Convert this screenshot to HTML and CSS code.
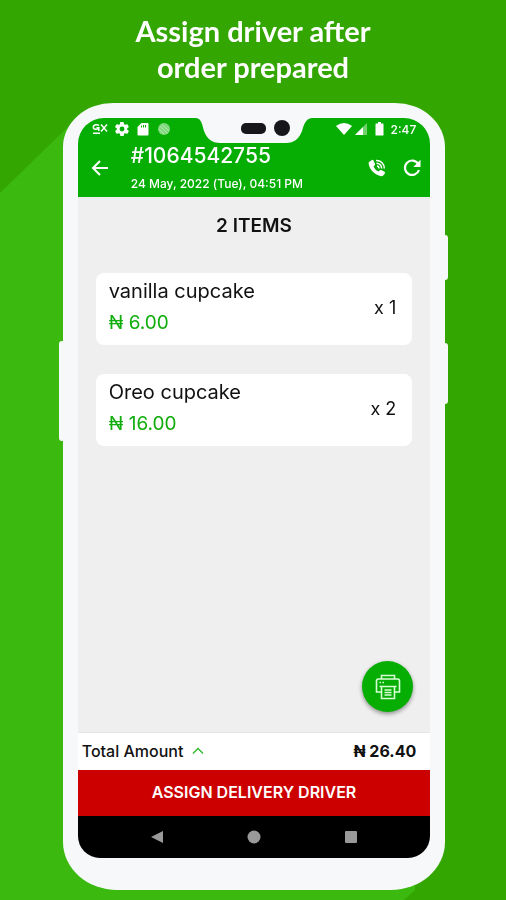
FILE: index.html
```html
<!DOCTYPE html>
<html lang="en">
<head>
<meta charset="utf-8">
<meta name="viewport" content="width=device-width, initial-scale=1">
<title>Assign driver after order prepared</title>
<link rel="stylesheet" href="styles.css">
</head>
<body>
<svg class="backdrop" viewBox="0 0 506 900" preserveAspectRatio="none" aria-hidden="true">
  <path d="M0 193L76 119 415 600V890L404 900H0z" fill="#3bb90f"/>
</svg>
<main class="page">
  <h1 class="headline">Assign driver after<br>order prepared</h1>
  <div class="phone">
    <span class="key key-left"></span>
    <span class="key key-power"></span>
    <span class="key key-volume"></span>
    <div class="screen">
      <div class="notch">
        <svg width="116" height="26" viewBox="0 0 116 26" aria-hidden="true">
          <path d="M0 0C6 1 6 7 8 13C11 21 16 25 24 25H90C98 25 103 21 106 13C108 7 109 1 116 0z" fill="#f6f8fa"/>
          <rect x="45" y="5" width="25" height="11" rx="5" fill="#17171b"/>
          <circle cx="86" cy="10" r="8" fill="#17171b"/>
        </svg>
      </div>
      <div class="status">
        <div class="status-group">
          <svg width="16" height="14" viewBox="0 0 16 14" fill="none" stroke="#fff" aria-hidden="true">
            <path d="M7 3.5C6 2.5 1.5 2 1.3 5C1.3 8 6 8 6.8 5.8H4.5M6.8 6V9M1 11.2H8" stroke-width="1.5"/>
            <path d="M9 2.5L15 9.5M15 2.5L9 9.5" stroke-width="1.5"/>
          </svg>
          <svg width="14" height="14" viewBox="2 2 20 20" fill="#fff" aria-hidden="true"><path d="M19.4 13c.1-.7.1-1.3 0-2l2.1-1.600c.2-.2.2-.4.1-.6l-2-3.500c-.1-.2-.3-.3-.6-.2l-2.500 1c-.5-.4-1.100-.7-1.700-1l-.4-2.600c0-.3-.2-.5-.5-.5h-4c-.3 0-.5.2-.5.5L9 5.100c-.6.3-1.200.6-1.700 1l-2.500-1c-.2-.1-.5 0-.6.2l-2 3.500c-.1.2 0 .4.1.6L4.500 11c-.1.7-.1 1.300 0 2l-2.100 1.600c-.2.2-.2.4-.1.6l2 3.500c.1.2.3.3.6.2l2.500-1c.5.4 1.100.7 1.700 1l.4 2.600c0 .3.2.5.5.5h4c.3 0 .5-.2.5-.5l.4-2.600c.6-.3 1.200-.6 1.700-1l2.500 1c.2.1.5 0 .6-.2l2-3.500c.1-.2.1-.4-.1-.6zM12 15.500a3.500 3.500 0 1 1 0-7 3.500 3.500 0 0 1 0 7z"/></svg>
          <svg width="14" height="14" viewBox="0 0 14 14" fill="#fff" aria-hidden="true"><path fill-rule="evenodd" d="M5.500 1H11.500Q12.500 1 12.500 2V12Q12.500 13.500 11.500 13.500H2.500Q1.500 13.500 1.500 12V5zM5 3.500V5.500H6V3.500zM7 3V5.500H8V3zM9 3V5.500H10V3z"/></svg>
          <svg width="14" height="14" viewBox="0 0 14 14" aria-hidden="true"><circle cx="7" cy="7" r="6" fill="#7fd77c"/><path d="M3 4L10 11M5 2.500L12 9M2 7L7 12" stroke="#b5e9b2"/></svg>
        </div>
        <div class="status-group status-right">
          <svg width="16" height="14" viewBox="0 0 16 14" fill="#fff" aria-hidden="true"><path d="M0 4Q8-2 16 4L8 13z"/></svg>
          <svg width="13" height="14" viewBox="0 0 13 14" aria-hidden="true"><path d="M0 13L12 1V13z" fill="#71d16e"/><path d="M0 13L8 5V13z" fill="#fff"/></svg>
          <svg class="battery" width="9" height="14" viewBox="0 0 9 14" fill="#fff" aria-hidden="true"><path d="M3 0H6V1.500H8Q8.500 1.500 8.500 2V13Q8.500 13.500 8 13.500H1Q.5 13.500 .5 13V2Q.5 1.500 1 1.500H3z"/></svg>
          <span>2:47</span>
        </div>
      </div>
      <header class="appbar">
        <button class="icon-button" type="button" aria-label="Back">
          <svg width="18" height="18" viewBox="0 0 18 18" fill="none" stroke="#fff" stroke-width="2"><path d="M17 9H2.500M9 2L2 9L9 16"/></svg>
        </button>
        <div class="order">
          <h2 class="order-id">#1064542755</h2>
          <p class="order-date">24 May, 2022 (Tue), 04:51 PM</p>
        </div>
        <button class="icon-button" type="button" aria-label="Call customer">
          <svg width="18" height="18" viewBox="0 0 18 18"><path d="M1 3L4 1Q5 .5 5.500 1.500L7 5Q7.300 6 6.500 6.500L5.500 7.500Q7 11 10.500 12.500L11.800 11.300Q12.500 10.700 13.300 11L16.500 12.800Q17.500 13.500 16.800 14.500L15 16.700Q14 17.500 12.500 17C6 15 2 11 .7 5Q.4 3.700 1 3z" fill="#fff"/><path d="M8 1.500C13 1.200 16.500 5 16.300 9.500M8.500 4.300C11.800 4.300 13.800 6.500 13.600 9.500M9 7C10.500 7.200 11 8 11 9.500" fill="none" stroke="#fff" stroke-width="1.500"/></svg>
        </button>
        <button class="icon-button" type="button" aria-label="Refresh">
          <svg width="18" height="18" viewBox="0 0 18 18"><path d="M15 4.500A7.200 7.200 0 1 0 16 11" fill="none" stroke="#fff" stroke-width="2.200"/><path d="M17.500 .8V8H10.300z" fill="#fff"/></svg>
        </button>
      </header>
      <section class="items">
        <h3 class="items-title">2 ITEMS</h3>
        <ul class="item-list">
          <li class="item">
            <div><p class="name">vanilla cupcake</p><p class="price">₦ 6.00</p></div>
            <span class="quantity">x 1</span>
          </li>
          <li class="item">
            <div><p class="name">Oreo cupcake</p><p class="price">₦ 16.00</p></div>
            <span class="quantity">x 2</span>
          </li>
        </ul>
        <button class="print" type="button" aria-label="Print order">
          <svg width="26" height="26" viewBox="0 0 26 26" fill="none" stroke="#d9ffd5" stroke-width="1.600"><path d="M6.500 5V1.500H19.500V5M6.500 18H1.500V7Q1.500 5 3.500 5H22.500Q24.500 5 24.500 7V18H19.500M6.500 12.500H19.500V24.500H6.500zM4.500 12.500H21.500M9.500 16H16.500M9.500 18.500H16.500M9.500 21H16.500M4.500 8.500H6M7.500 8.500H9"/></svg>
        </button>
      </section>
      <div class="total">
        <button class="total-toggle" type="button">Total Amount
          <svg width="12" height="8" viewBox="0 0 12 8" fill="none" stroke="#2fb52c" stroke-width="1.300" aria-hidden="true"><path d="M1 6.500L6 1.500L11 6.500"/></svg>
        </button>
        <strong class="total-value">₦ 26.40</strong>
      </div>
      <button class="assign" type="button">ASSIGN DELIVERY DRIVER</button>
      <nav class="system-nav" aria-label="System">
        <button class="icon-button" type="button" aria-label="Go back"><svg width="14" height="14" viewBox="0 0 14 14" fill="#999"><path d="M1 7L13 1V13z"/></svg></button>
        <button class="icon-button" type="button" aria-label="Home"><svg width="14" height="14" viewBox="0 0 14 14" fill="#999"><circle cx="7" cy="7" r="6.500"/></svg></button>
        <button class="icon-button" type="button" aria-label="Recent apps"><svg width="14" height="14" viewBox="0 0 14 14" fill="#999"><rect x="1" y="1" width="12" height="12" rx="1"/></svg></button>
      </nav>
    </div>
  </div>
</main>
</body>
</html>
```

FILE: styles.css
```css
* {
  box-sizing: border-box;
}

body,
h1,
h2,
h3,
p,
ul {
  margin: 0;
  padding: 0;
}

body {
  background: #33a602;
  color: #111;
  font-family: Inter, "Liberation Sans", sans-serif;
}

button {
  padding: 0;
  border: 0;
  background: none;
  color: inherit;
  font: inherit;
  cursor: pointer;
}

svg {
  display: block;
  flex: none;
}

.backdrop {
  position: fixed;
  inset: 0;
  z-index: -1;
  width: 100%;
  height: 100%;
}

.page {
  display: flex;
  flex-direction: column;
  min-height: 100vh;
  padding: 13px 12% 10px;
}

.headline {
  margin-bottom: 18px;
  color: #fff;
  font-family: Lato, sans-serif;
  font-size: 29px;
  font-weight: 700;
  line-height: 36px;
  text-align: center;
}

.phone {
  position: relative;
  display: flex;
  flex: 1;
  margin: 0 0 0 2px;
  padding: 15px 15px 32px;
  border-radius: 50px 50px 54px 54px / 44px 44px 48px 48px;
  background: #f6f8fa;
}

.key {
  position: absolute;
  width: 8px;
  border-radius: 3px;
  background: #f6f8fa;
}

.key-left {
  top: 238px;
  left: -4px;
  height: 100px;
}

.key-power {
  top: 132px;
  right: -3px;
  height: 45px;
}

.key-volume {
  top: 240px;
  right: -3px;
  height: 61px;
}

.screen {
  position: relative;
  display: flex;
  flex: 1;
  flex-direction: column;
  overflow: hidden;
  border-radius: 26px 26px 22px 22px;
  background: #efefef;
}

.notch {
  position: absolute;
  top: 0;
  left: 0;
  right: 0;
  display: flex;
  justify-content: center;
}

.status {
  display: flex;
  align-items: center;
  justify-content: space-between;
  height: 22px;
  padding: 0 14px;
  background: #06ae04;
  color: #fff;
  font-size: 12px;
  font-weight: 500;
}

.status-group {
  display: flex;
  align-items: center;
  gap: 7px;
}

.status-right {
  gap: 3px;
}

.battery {
  margin: 0 4px;
}

.appbar {
  display: flex;
  align-items: center;
  height: 57px;
  padding: 0 9px 2px 13px;
  background: #06ae04;
  color: #fff;
}

.icon-button {
  display: flex;
  align-items: center;
  justify-content: center;
}

.appbar .icon-button + .icon-button {
  margin-left: 17px;
}

.order {
  flex: 1;
  padding-left: 22px;
}

.order-id {
  margin-bottom: 6px;
  font-size: 21px;
  font-weight: 500;
  line-height: 26px;
}

.order-date {
  font-size: 12px;
  font-weight: 500;
  line-height: 18px;
}

.items {
  position: relative;
  flex: 1;
  padding: 17px 18px;
}

.items-title {
  font-size: 19px;
  font-weight: 600;
  line-height: 24px;
  text-align: center;
}

.item-list {
  display: flex;
  flex-direction: column;
  gap: 29px;
  margin-top: 35px;
  list-style: none;
}

.item {
  display: flex;
  align-items: center;
  justify-content: space-between;
  height: 72px;
  padding: 0 16px 4px 13px;
  border-radius: 8px;
  background: #fff;
  line-height: 31px;
}

.name {
  font-size: 20px;
}

.price {
  color: #10ad0c;
  font-size: 19px;
}

.quantity {
  font-size: 18px;
}

.print {
  position: absolute;
  right: 17px;
  bottom: 20px;
  display: flex;
  align-items: center;
  justify-content: center;
  width: 51px;
  height: 51px;
  border-radius: 50%;
  background: #06ae04;
  box-shadow: 0 2px 4px rgba(0, 0, 0, 0.4);
}

.total {
  display: flex;
  align-items: center;
  justify-content: space-between;
  height: 38px;
  padding: 0 14px 2px 4px;
  border-top: 1px solid #e2e4e6;
  background: #fff;
}

.total-toggle {
  display: flex;
  align-items: center;
  gap: 9px;
  font-size: 16px;
  font-weight: 500;
}

.total-value {
  font-size: 16px;
  font-weight: 700;
}

.assign {
  height: 46px;
  padding-bottom: 2px;
  background: #cd0000;
  color: #fff;
  font-size: 16px;
  font-weight: 600;
}

.system-nav {
  display: flex;
  align-items: center;
  justify-content: center;
  gap: 83px;
  height: 42px;
  background: #000;
}
```
